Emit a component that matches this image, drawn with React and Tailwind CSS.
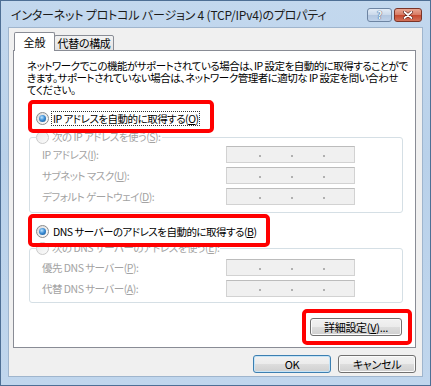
import React from "react";

const FONT = "font-['Noto_Sans_CJK_JP','Noto_Sans',sans-serif] [font-feature-settings:'palt']";

function Radio({ checked = false, disabled = false }) {
  return (
    <span
      className={
        disabled
          ? "relative inline-block w-[13px] h-[13px] shrink-0 rounded-full border border-[#cacaca] bg-[linear-gradient(135deg,#e9e9e9,#fbfbfb)]"
          : "relative inline-block w-[13px] h-[13px] shrink-0 rounded-full border border-[#8a8b8c] bg-[linear-gradient(135deg,#d9d9d9,#ffffff)]"
      }
    >
      {checked && (
        <span className="absolute left-[2px] top-[2px] w-[7px] h-[7px] rounded-full bg-[radial-gradient(circle_at_40%_35%,#bfe6ff_0%,#3f8fd6_45%,#0f4d8a_100%)]" />
      )}
    </span>
  );
}

function U({ children }) {
  return <span className="underline underline-offset-[1px]">{children}</span>;
}

function IpField() {
  return (
    <div className="flex items-end h-[17px] w-[129px] border border-[#d2d2d2] border-t-[#bcbcbc] bg-[#f0f0f0] pb-[5px] pl-[32px] gap-[30px]">
      <span className="w-[2px] h-[2px] bg-[#b0b0b0]" />
      <span className="w-[2px] h-[2px] bg-[#b0b0b0]" />
      <span className="w-[2px] h-[2px] bg-[#b0b0b0]" />
    </div>
  );
}

function FieldRow({ children }) {
  return (
    <div className="grid grid-cols-[184px_129px] items-center h-[17px]">
      <span className="text-[#a3a3a3] leading-[17px] whitespace-nowrap">{children}</span>
      <IpField />
    </div>
  );
}

function WinButton({ children, def = false, className = "" }) {
  return (
    <div
      className={
        (def
          ? "border-[#3c7fb1] shadow-[inset_0_0_0_1px_#c6e4f7] "
          : "border-[#707070] shadow-[inset_0_0_0_1px_#fbfbfb] ") +
        "flex items-center justify-center h-[18px] rounded-[3px] border bg-[linear-gradient(#f2f2f2_0%,#ebebeb_50%,#dddddd_51%,#cfcfcf_100%)] text-[11px] tracking-[-0.3px] leading-none text-black " +
        className
      }
    >
      {children}
    </div>
  );
}

export default function App() {
  return (
    <div className={"relative w-[431px] h-[386px] flex flex-col overflow-hidden border border-[#4e6f95] bg-[linear-gradient(180deg,#c3d8ee_0%,#b9d1ea_40%,#c0d6ed_100%)] " + FONT}>
      {/* Title bar */}
      <div className="h-[26px] flex items-start pl-[10px] pr-[8px]">
        <div className="mt-[5px] text-[12px] leading-[18px] tracking-[-0.2px] text-[#1b1b1b] whitespace-nowrap">
          インターネット プロトコル バージョン 4 (TCP/IPv4)のプロパティ
        </div>
        <div className="ml-auto mt-[7px] flex gap-[2px]">
          <div className="w-[25px] h-[14px] rounded-[3px] border border-[#6d84a2] bg-[linear-gradient(#e3ecf7_0%,#c9d8ea_50%,#b3c7e0_51%,#bfd2ea_100%)] flex items-center justify-center text-[10px] font-bold leading-none text-[#f4f8fc] [text-shadow:0_0_1px_#30507a,0_0_1px_#30507a]">
            ?
          </div>
          <div className="w-[28px] h-[14px] rounded-[3px] border border-[#7a3428] bg-[linear-gradient(#e9a793_0%,#d77a63_50%,#c5472d_51%,#d2725a_100%)] flex items-center justify-center">
            <svg width="10" height="8" viewBox="0 0 10 8">
              <path d="M1.5 1 L8.5 7 M8.5 1 L1.5 7" stroke="#5a1a10" strokeWidth="3" strokeLinecap="round" />
              <path d="M1.5 1 L8.5 7 M8.5 1 L1.5 7" stroke="#ffffff" strokeWidth="1.8" strokeLinecap="round" />
            </svg>
          </div>
        </div>
      </div>

      {/* Client area */}
      <div className="mx-[7px] h-[350px] border border-[#9fb5cd] bg-[#f0f0f0] flex flex-col pt-[4px] pl-[4px] pr-[6px] text-[10.5px] tracking-[-0.5px] text-black">
        {/* Tabs */}
        <div className="relative z-10 -mb-[1px] flex items-end pl-[1px] h-[19px] tracking-normal">
          <div className="h-[19px] w-[41px] rounded-t-[2px] border border-b-0 border-[#898c95] bg-white flex items-center justify-center text-[11px] leading-none">
            全般
          </div>
          <div className="-ml-[1px] h-[16px] w-[60px] rounded-t-[2px] border border-[#898c95] bg-[linear-gradient(#f3f3f3,#e3e3e3)] flex items-center justify-center text-[11px] tracking-[-0.3px] leading-none">
            代替の構成
          </div>
        </div>

        {/* Panel */}
        <div className="h-[298px] border border-[#898c95] bg-white flex flex-col pt-[9px] pl-[13px] pr-[12px]">
          <p className="leading-[12px] whitespace-nowrap">
            ネットワークでこの機能がサポートされている場合は、IP 設定を自動的に取得することがで
            <br />
            きます。サポートされていない場合は、ネットワーク管理者に適切な IP 設定を問い合わせ
            <br />
            てください。
          </p>

          <div className="mt-[14px] ml-[9px] h-[16px] flex items-center gap-[1px]">
            <Radio checked />
            <span className="ml-[1px] border border-dotted border-[#333] px-[1px] leading-[13px] whitespace-nowrap">
              IP アドレスを自動的に取得する(<U>O</U>)
            </span>
          </div>

          <fieldset className="mt-[4px] ml-[2px] border border-[#d5dfe5] rounded-[3px] px-[6px] pb-[7px]">
            <legend className="h-[14px] flex items-center gap-[3px] text-[#a3a3a3] pr-[1px]">
              <Radio disabled />
              <span className="leading-[14px] whitespace-nowrap">
                次の IP アドレスを使う(<U>S</U>):
              </span>
            </legend>
            <div className="mt-[2px] ml-[6px] flex flex-col gap-[4px]">
              <FieldRow>IP アドレス(<U>I</U>):</FieldRow>
              <FieldRow>サブネット マスク(<U>U</U>):</FieldRow>
              <FieldRow>デフォルト ゲートウェイ(<U>D</U>):</FieldRow>
            </div>
          </fieldset>

          <div className="mt-[10px] ml-[9px] h-[16px] flex items-center gap-[4px]">
            <Radio checked />
            <span className="leading-[13px] whitespace-nowrap">
              DNS サーバーのアドレスを自動的に取得する(<U>B</U>)
            </span>
          </div>

          <fieldset className="mt-[2px] ml-[2px] border border-[#d5dfe5] rounded-[3px] px-[6px] pb-[5px]">
            <legend className="h-[14px] flex items-center gap-[3px] text-[#a3a3a3] pr-[1px]">
              <Radio disabled />
              <span className="leading-[14px] whitespace-nowrap">
                次の DNS サーバーのアドレスを使う(<U>E</U>):
              </span>
            </legend>
            <div className="mt-[4px] ml-[6px] flex flex-col gap-[4px]">
              <FieldRow>優先 DNS サーバー(<U>P</U>):</FieldRow>
              <FieldRow>代替 DNS サーバー(<U>A</U>):</FieldRow>
            </div>
          </fieldset>

          <div className="mt-[15px] flex justify-end pr-[1px]">
            <WinButton className="w-[92px]">
              詳細設定(<U>V</U>)...
            </WinButton>
          </div>
        </div>

        {/* Bottom buttons */}
        <div className="mt-[7px] flex justify-end gap-[7px]">
          <WinButton def className="w-[78px]">OK</WinButton>
          <WinButton className="w-[78px]">キャンセル</WinButton>
        </div>
      </div>

      {/* Red annotation boxes */}
      <div className="absolute left-[27px] top-[99px] w-[186px] h-[33px] rounded-[5px] border-[4px] border-[#ff0000]" />
      <div className="absolute left-[27px] top-[213px] w-[242px] h-[33px] rounded-[5px] border-[4px] border-[#ff0000]" />
      <div className="absolute left-[301px] top-[308px] w-[110px] h-[36px] rounded-[5px] border-[4px] border-[#ff0000]" />
    </div>
  );
}
